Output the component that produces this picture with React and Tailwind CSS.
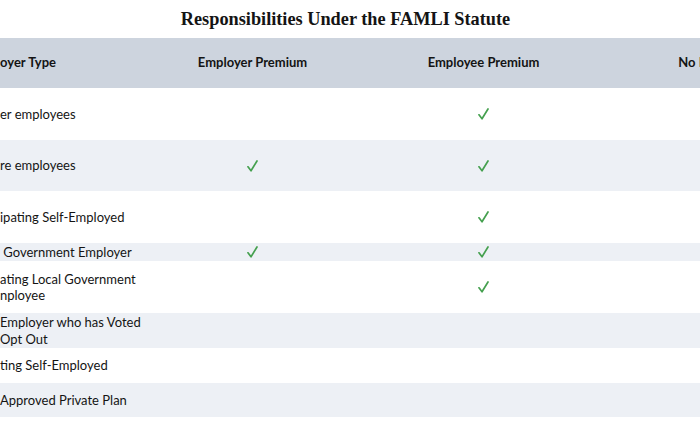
import React from 'react';

const rows = [
  { label: ['er employees'], employer: false, employee: true, h: 'h-[52px]', bg: 'bg-white' },
  { label: ['re employees'], employer: true, employee: true, h: 'h-[51px]', bg: 'bg-[#edf0f5]' },
  { label: ['ipating Self-Employed'], employer: false, employee: true, h: 'h-[52px]', bg: 'bg-white' },
  { label: [' Government Employer'], employer: true, employee: true, h: 'h-[18px]', bg: 'bg-[#edf0f5]' },
  { label: ['ating Local Government', 'nployee'], employer: false, employee: true, h: 'h-[52px]', bg: 'bg-white' },
  { label: ['Employer who has Voted', 'Opt Out'], employer: false, employee: false, h: 'h-[35px]', bg: 'bg-[#edf0f5]' },
  { label: ['ting Self-Employed'], employer: false, employee: false, h: 'h-[35px]', bg: 'bg-white' },
  { label: ['Approved Private Plan'], employer: false, employee: false, h: 'h-[34px]', bg: 'bg-[#edf0f5]' },
];

function Check() {
  return (
    <svg width="11" height="12" viewBox="0 0 11 12" fill="none">
      <path d="M1 6.8 L4 10.8 L10 1" stroke="#45a04f" strokeWidth="1.7" strokeLinecap="round" strokeLinejoin="round" />
    </svg>
  );
}

function App() {
  return (
    <div className="w-[700px] h-[441px] overflow-hidden bg-white text-[#141414]" style={{ fontFamily: 'Lato, "Open Sans", sans-serif' }}>
      <div className="h-[38px] flex items-center justify-center pr-[9px]">
        <h1 className="text-[18.3px] font-bold leading-none pt-[1px]" style={{ fontFamily: '"Liberation Serif", serif' }}>
          Responsibilities Under the FAMLI Statute
        </h1>
      </div>

      <div className="w-[830px]">
        <div className="grid grid-cols-[137px_231px_231px_231px] h-[50px] items-center bg-[#cdd4de] text-[13px] font-bold">
          <div className="whitespace-nowrap">oyer Type</div>
          <div className="text-center">Employer Premium</div>
          <div className="text-center">Employee Premium</div>
          <div className="text-center">No Premium</div>
        </div>

        {rows.map((row, i) => (
          <div key={i} className={`grid grid-cols-[137px_231px_231px_231px] items-center text-[13px] leading-[16.5px] ${row.h} ${row.bg}`}>
            <div className="whitespace-pre">
              {row.label.map((line, j) => (
                <div key={j}>{line}</div>
              ))}
            </div>
            <div className="flex justify-center">{row.employer && <Check />}</div>
            <div className="flex justify-center">{row.employee && <Check />}</div>
            <div />
          </div>
        ))}
      </div>
    </div>
  );
}

export default App;
